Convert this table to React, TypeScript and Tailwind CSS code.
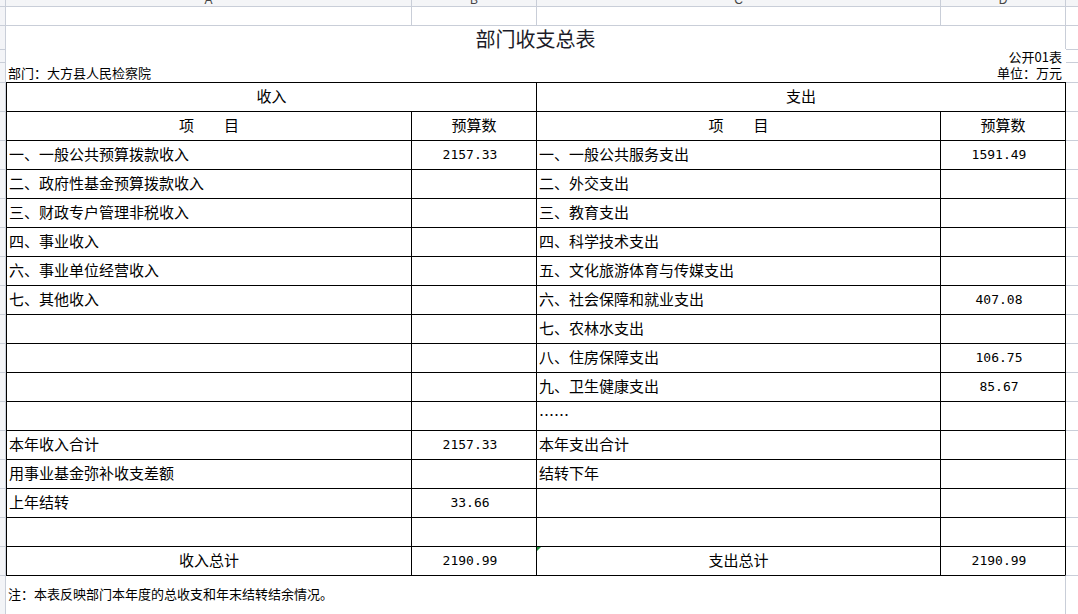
import React from 'react';

type Cell = { text?: string; num?: boolean; center?: boolean; span?: boolean; mark?: boolean };

const income: [string, string][] = [
  ['一、一般公共预算拨款收入', '2157.33'],
  ['二、政府性基金预算拨款收入', ''],
  ['三、财政专户管理非税收入', ''],
  ['四、事业收入', ''],
  ['六、事业单位经营收入', ''],
  ['七、其他收入', ''],
  ['', ''],
  ['', ''],
  ['', ''],
  ['', ''],
  ['本年收入合计', '2157.33'],
  ['用事业基金弥补收支差额', ''],
  ['上年结转', '33.66'],
  ['', ''],
];

const expense: [string, string][] = [
  ['一、一般公共服务支出', '1591.49'],
  ['二、外交支出', ''],
  ['三、教育支出', ''],
  ['四、科学技术支出', ''],
  ['五、文化旅游体育与传媒支出', ''],
  ['六、社会保障和就业支出', '407.08'],
  ['七、农林水支出', ''],
  ['八、住房保障支出', '106.75'],
  ['九、卫生健康支出', '85.67'],
  ['……', ''],
  ['本年支出合计', ''],
  ['结转下年', ''],
  ['', ''],
  ['', ''],
];

// row number strip on the left of the sheet
const Gutter = ({ top = true }: { top?: boolean }) => (
  <div className={`w-[6px] shrink-0 bg-[#f3f4f7] border-r border-[#c9ced8] ${top ? 'border-t' : ''}`} />
);

const TableRow = ({ cells }: { cells: Cell[] }) => (
  <div className="flex h-[29px]">
    <Gutter />
    <div className="grid grid-cols-[405px_125px_404px_125px] w-[1060px] border-r border-black">
      {cells.map((c, i) => (
        <div
          key={i}
          className={`relative flex items-center border-l border-t border-black leading-none ${c.span ? 'col-span-2' : ''} ${
            c.num
              ? "justify-center pr-[8px] pb-[2px] font-['DejaVu_Sans_Mono',monospace] text-[13px]"
              : c.center
              ? 'justify-center pb-[4px] text-[15px]'
              : 'pl-[2px] pb-[4px] text-[15px]'
          }`}
        >
          {c.mark && (
            <span className="absolute left-0 top-0 w-0 h-0 border-t-[4px] border-r-[4px] border-t-[#1d8f3a] border-r-transparent" />
          )}
          {c.text}
        </div>
      ))}
    </div>
    <div className="flex-1 border-t border-[#c9ced8]" />
  </div>
);

export default function App() {
  return (
    <div className="w-[1078px] h-[614px] overflow-hidden bg-white text-black font-['Noto_Sans_CJK_SC',sans-serif]">
      {/* column letters, mostly scrolled out of view */}
      <div className="flex h-[6px] bg-[#f4f5f7] font-['Liberation_Sans',sans-serif]">
        <Gutter top={false} />
        <div className="grid grid-cols-[405px_125px_404px_125px] w-[1060px] border-r border-[#c9ced8]">
          {['A', 'B', 'C', 'D'].map((l, i) => (
            <div key={l} className={`h-[6px] overflow-hidden flex justify-center items-start border-[#c9ced8] ${i ? 'border-l' : ''}`}>
              <span className="-mt-[6px] text-[12px] leading-[12px] text-[#444]">{l}</span>
            </div>
          ))}
        </div>
        <div className="flex-1" />
      </div>

      <div className="flex h-[19px]">
        <Gutter />
        <div className="grid grid-cols-[405px_125px_404px_125px] w-[1060px] border-r border-t border-[#c9ced8]">
          <div />
          <div className="border-l border-[#c9ced8]" />
          <div className="border-l border-[#c9ced8]" />
          <div className="border-l border-[#c9ced8]" />
        </div>
        <div className="flex-1 border-t border-[#c9ced8]" />
      </div>

      <div className="flex h-[24px]">
        <Gutter />
        <div className="w-[1060px] flex justify-center items-center pt-[3px] border-t border-r border-[#c9ced8] text-[20px] leading-none text-[#1c1c28]">
          部门收支总表
        </div>
        <div className="flex-1 border-t border-[#c9ced8]" />
      </div>

      <div className="flex h-[13px]">
        <Gutter />
        <div className="w-[1060px] flex justify-end items-center pt-[2px] pr-[4px] text-[13px] leading-[13px]">公开01表</div>
        <div className="flex-1 border-t border-[#c9ced8]" />
      </div>

      <div className="flex h-[20px]">
        <Gutter />
        <div className="w-[1060px] flex justify-between items-center pt-[1px] pl-[2px] pr-[4px] text-[13px] leading-[13px]">
          <span>部门：大方县人民检察院</span>
          <span>单位：万元</span>
        </div>
        <div className="flex-1 border-t border-[#c9ced8]" />
      </div>

      <TableRow cells={[{ text: '收入', center: true, span: true }, { text: '支出', center: true, span: true }]} />
      <TableRow
        cells={[
          { text: '项\u3000\u3000目', center: true },
          { text: '预算数', center: true },
          { text: '项\u3000\u3000目', center: true },
          { text: '预算数', center: true },
        ]}
      />
      {income.map((r, i) => (
        <TableRow
          key={i}
          cells={[{ text: r[0] }, { text: r[1], num: true }, { text: expense[i][0] }, { text: expense[i][1], num: true }]}
        />
      ))}
      <TableRow
        cells={[
          { text: '收入总计', center: true },
          { text: '2190.99', num: true },
          { text: '支出总计', center: true, mark: true },
          { text: '2190.99', num: true },
        ]}
      />

      <div className="flex h-[40px]">
        <Gutter />
        <div className="w-[1060px] flex items-center pl-[2px] pb-[4px] border-t border-t-black border-r border-r-[#c9ced8] text-[13px] leading-none">
          注：本表反映部门本年度的总收支和年末结转结余情况。
        </div>
        <div className="flex-1 border-t border-[#c9ced8]" />
      </div>
    </div>
  );
}
